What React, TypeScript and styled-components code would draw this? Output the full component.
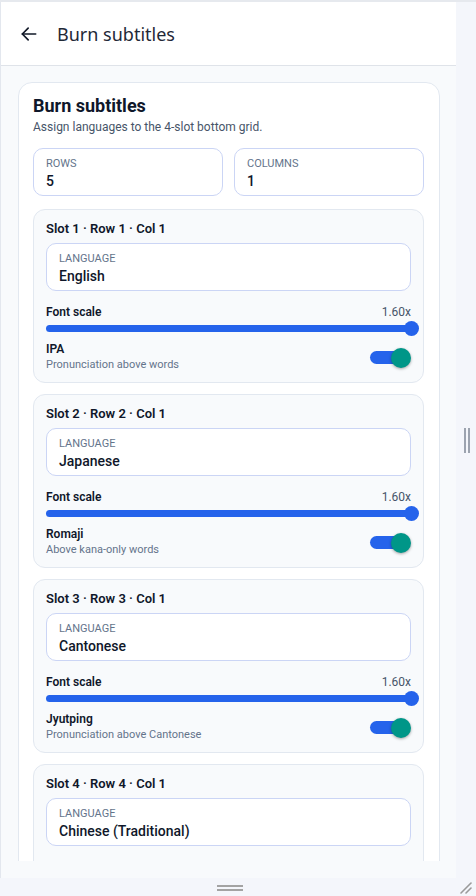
import React from "react";
import styled, { createGlobalStyle } from "styled-components";

const Global = createGlobalStyle`
  html, body { margin: 0; padding: 0; }
  body {
    background: #f4f6fb;
    font-family: Roboto, "Noto Sans", "Liberation Sans", sans-serif;
    color: #0f172a;
  }
  * { box-sizing: border-box; }
`;

const Shell = styled.div`
  display: grid;
  grid-template-columns: 456px 20px;
  grid-template-rows: 876px 20px;
  width: 476px;
  height: 896px;
  border-top: 2px solid #e6e9ee;
`;

const Frame = styled.div`
  display: flex;
  flex-direction: column;
  min-height: 0;
  background: #f8fafc;
  border-left: 1px solid #e3e7ee;
  overflow: hidden;
`;

const Header = styled.header`
  flex: 0 0 64px;
  display: flex;
  align-items: center;
  gap: 18px;
  padding-left: 18px;
  background: #ffffff;
  border-bottom: 1px solid #dfe3e9;
`;

const BackButton = styled.button`
  display: flex;
  align-items: center;
  justify-content: center;
  width: 20px;
  height: 20px;
  padding: 0;
  border: none;
  background: none;
  color: #111827;
`;

const HeaderTitle = styled.h1`
  margin: 0;
  font-family: "Noto Sans", Roboto, sans-serif;
  font-size: 18px;
  font-weight: 400;
  color: #1f2937;
`;

const Content = styled.main`
  flex: 1;
  min-height: 0;
  padding: 16px 16px 17px 17px;
  display: flex;
`;

const Viewport = styled.div`
  flex: 1;
  overflow: hidden;
`;

const Card = styled.section`
  background: #ffffff;
  border: 1px solid #e2e8f0;
  border-radius: 14px;
  padding: 12px 15px 14px 14px;
`;

const CardTitle = styled.h2`
  margin: 0;
  font-size: 18px;
  line-height: 22px;
  font-weight: 700;
  color: #0f172a;
`;

const CardSub = styled.p`
  margin: 2px 0 0;
  font-size: 12px;
  line-height: 16px;
  color: #475569;
`;

const GridRow = styled.div`
  display: grid;
  grid-template-columns: 1fr 1fr;
  gap: 11px;
  margin-top: 13px;
`;

const Field = styled.div`
  height: 48px;
  background: #ffffff;
  border: 1px solid #cbd5f5;
  border-radius: 10px;
  padding: 8px 12px 0;
  display: flex;
  flex-direction: column;
`;

const FieldLabel = styled.span`
  font-size: 11px;
  line-height: 13px;
  color: #64748b;
  text-transform: uppercase;
`;

const FieldValue = styled.span`
  margin-top: 3px;
  font-size: 14px;
  line-height: 17px;
  font-weight: 500;
  color: #0f172a;
`;

const SlotList = styled.div`
  display: flex;
  flex-direction: column;
  gap: 11px;
  margin-top: 13px;
`;

const Slot = styled.div`
  background: #f8fafc;
  border: 1px solid #e2e8f0;
  border-radius: 12px;
  padding: 11px 12px 10px;
  display: flex;
  flex-direction: column;
`;

const SlotTitle = styled.div`
  font-size: 13px;
  line-height: 16px;
  font-weight: 600;
  color: #0f172a;
  margin-bottom: 6px;
`;

const ScaleRow = styled.div`
  display: flex;
  justify-content: space-between;
  align-items: center;
  margin-top: 13px;
  font-size: 12px;
  line-height: 16px;
`;

const ScaleLabel = styled.span`
  font-weight: 600;
  color: #0f172a;
`;

const ScaleValue = styled.span`
  color: #475569;
`;

const Slider = styled.div`
  position: relative;
  height: 7px;
  margin: 5px 0 0;
  border-radius: 4px;
  background: #2563eb;
`;

const Thumb = styled.span`
  position: absolute;
  right: -8px;
  top: 50%;
  width: 15px;
  height: 15px;
  margin-top: -7.5px;
  border-radius: 50%;
  background: #2563eb;
`;

const ToggleRow = styled.div`
  display: flex;
  align-items: center;
  justify-content: space-between;
  margin-top: 9px;
`;

const ToggleText = styled.div`
  display: flex;
  flex-direction: column;
`;

const ToggleLabel = styled.span`
  font-size: 12px;
  line-height: 16px;
  font-weight: 600;
  color: #0f172a;
`;

const ToggleSub = styled.span`
  font-size: 11px;
  line-height: 15px;
  color: #64748b;
`;

const Switch = styled.span`
  position: relative;
  width: 41px;
  height: 20px;
  margin-top: 2px;
  display: flex;
  align-items: center;
`;

const SwitchTrack = styled.span`
  width: 34px;
  height: 13px;
  border-radius: 7px;
  background: #2563eb;
`;

const SwitchKnob = styled.span`
  position: absolute;
  right: 0;
  top: 0;
  width: 20px;
  height: 20px;
  border-radius: 50%;
  background: #009688;
  box-shadow: 0 1px 3px rgba(0, 0, 0, 0.35);
`;

const SideBar = styled.div`
  display: flex;
  align-items: center;
  justify-content: center;
  background: #f4f6fb;
`;

const VGrip = styled.span`
  display: flex;
  gap: 2px;
  margin-left: 1px;
  & > i {
    display: block;
    width: 2px;
    height: 25px;
    background: #9ca3af;
  }
`;

const BottomBar = styled.div`
  display: flex;
  align-items: center;
  justify-content: center;
  background: #f4f6fb;
`;

const HGrip = styled.span`
  display: flex;
  flex-direction: column;
  gap: 2px;
  margin-left: 3px;
  & > i {
    display: block;
    width: 26px;
    height: 2px;
    background: #a3a3a3;
  }
`;

const Corner = styled.div`
  display: flex;
  align-items: center;
  justify-content: center;
  background: #f4f6fb;
`;

type SlotData = {
  n: number;
  lang: string;
  toggle: string;
  sub: string;
};

const slots: SlotData[] = [
  { n: 1, lang: "English", toggle: "IPA", sub: "Pronunciation above words" },
  { n: 2, lang: "Japanese", toggle: "Romaji", sub: "Above kana-only words" },
  { n: 3, lang: "Cantonese", toggle: "Jyutping", sub: "Pronunciation above Cantonese" },
  { n: 4, lang: "Chinese (Traditional)", toggle: "Pinyin", sub: "Pronunciation above Chinese" },
];

function SlotCard({ s }: { s: SlotData }) {
  return (
    <Slot>
      <SlotTitle>
        Slot {s.n} · Row {s.n} · Col 1
      </SlotTitle>
      <Field>
        <FieldLabel>Language</FieldLabel>
        <FieldValue>{s.lang}</FieldValue>
      </Field>
      <ScaleRow>
        <ScaleLabel>Font scale</ScaleLabel>
        <ScaleValue>1.60x</ScaleValue>
      </ScaleRow>
      <Slider>
        <Thumb />
      </Slider>
      <ToggleRow>
        <ToggleText>
          <ToggleLabel>{s.toggle}</ToggleLabel>
          <ToggleSub>{s.sub}</ToggleSub>
        </ToggleText>
        <Switch>
          <SwitchTrack />
          <SwitchKnob />
        </Switch>
      </ToggleRow>
    </Slot>
  );
}

export default function App() {
  return (
    <>
      <Global />
      <Shell>
        <Frame>
          <Header>
            <BackButton aria-label="Back">
              <svg width="20" height="20" viewBox="0 0 24 24" fill="none" stroke="currentColor" strokeWidth="2" strokeLinecap="round" strokeLinejoin="round">
                <path d="M20 12H4" />
                <path d="M11 5l-7 7 7 7" />
              </svg>
            </BackButton>
            <HeaderTitle>Burn subtitles</HeaderTitle>
          </Header>
          <Content>
            <Viewport>
              <Card>
                <CardTitle>Burn subtitles</CardTitle>
                <CardSub>Assign languages to the 4-slot bottom grid.</CardSub>
                <GridRow>
                  <Field>
                    <FieldLabel>Rows</FieldLabel>
                    <FieldValue>5</FieldValue>
                  </Field>
                  <Field>
                    <FieldLabel>Columns</FieldLabel>
                    <FieldValue>1</FieldValue>
                  </Field>
                </GridRow>
                <SlotList>
                  {slots.map((s) => (
                    <SlotCard key={s.n} s={s} />
                  ))}
                </SlotList>
              </Card>
            </Viewport>
          </Content>
        </Frame>
        <SideBar>
          <VGrip>
            <i />
            <i />
          </VGrip>
        </SideBar>
        <BottomBar>
          <HGrip>
            <i />
            <i />
          </HGrip>
        </BottomBar>
        <Corner>
          <svg width="14" height="14" viewBox="0 0 14 14" stroke="#9a9a9a" strokeWidth="1.6" strokeLinecap="round">
            <path d="M2 12L12 2" />
            <path d="M7 12L12 7" />
          </svg>
        </Corner>
      </Shell>
    </>
  );
}
